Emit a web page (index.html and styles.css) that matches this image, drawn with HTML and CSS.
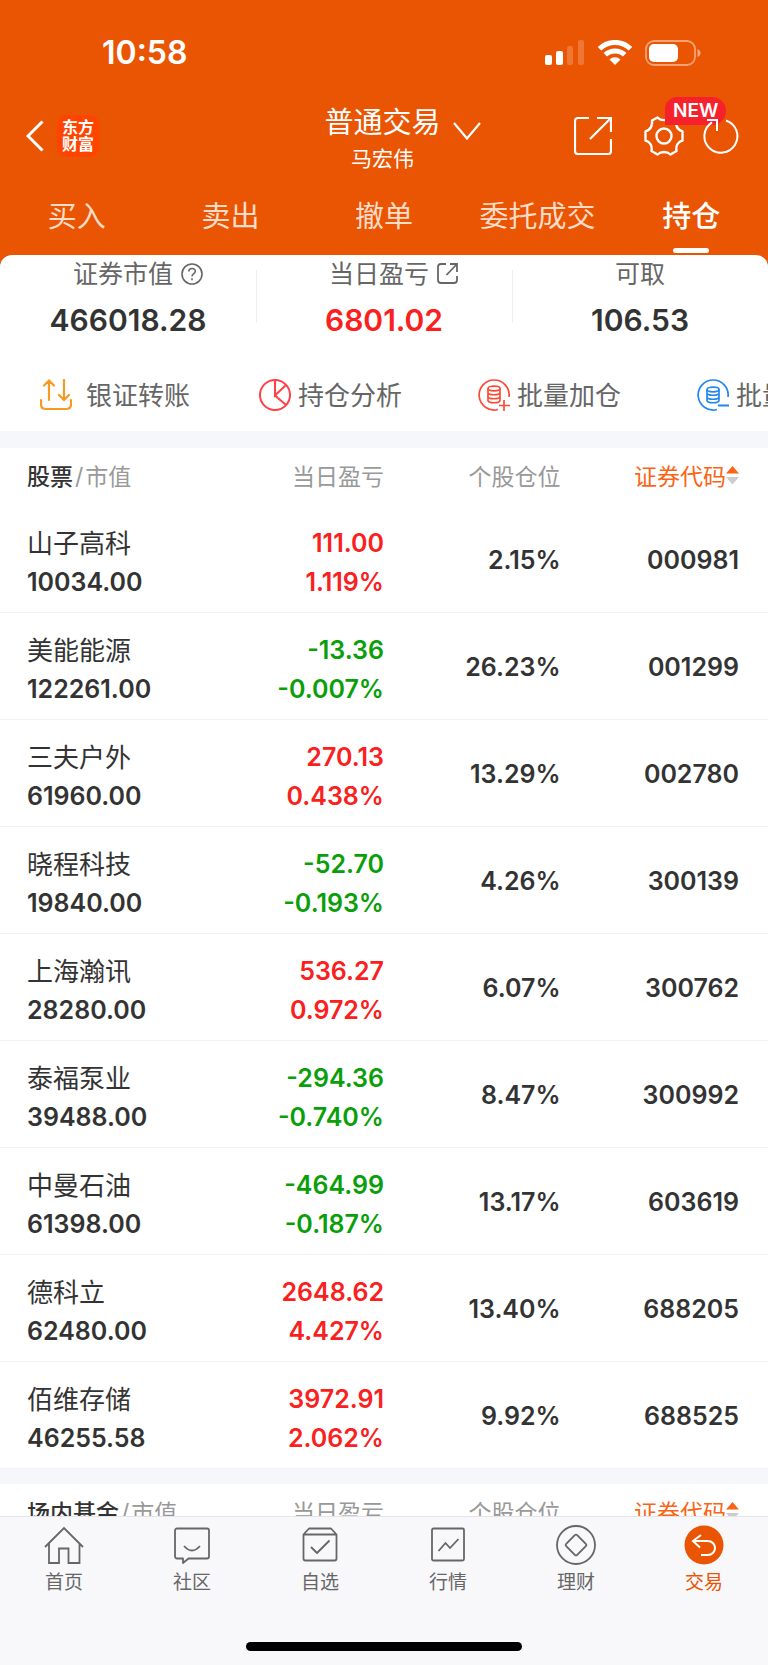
FILE: index.html
```html
<!DOCTYPE html>
<html lang="zh-CN">
<head>
  <meta charset="UTF-8">
  <meta name="viewport" content="width=device-width, initial-scale=1.0">
  <title>普通交易 - 持仓</title>
  <link rel="stylesheet" href="styles.css">
</head>
<body>
  <div class="app">
    <header class="header">
      <div class="status-bar">
        <div class="clock">10:58</div>
        <div class="status-icons">
          <svg width="40" height="26" viewBox="0 0 40 26" fill="#fff">
            <rect x="0" y="15" width="7" height="10" rx="2"/>
            <rect x="11" y="11" width="7" height="14" rx="2"/>
            <rect x="22" y="6" width="6" height="19" rx="2" opacity=".2"/>
            <rect x="33" y="0" width="6" height="25" rx="2" opacity=".2"/>
          </svg>
          <svg width="36" height="26" viewBox="0 0 36 26" fill="none" stroke="#fff" stroke-width="5">
            <path d="M2.500 8.800A22 22 0 0 1 33.500 8.800"/>
            <path d="M8.300 14.800A14 14 0 0 1 27.700 14.800"/>
            <path d="M18 25l-5.500-5.500a8 8 0 0 1 11 0z" fill="#fff" stroke="none"/>
          </svg>
          <svg width="56" height="26" viewBox="0 0 56 26">
            <rect x="1" y="1" width="49" height="24" rx="8" fill="none" stroke="#fff" stroke-width="1.800" opacity=".45"/>
            <rect x="4" y="4" width="29" height="18" rx="5" fill="#fff"/>
            <path d="M52.500 9c4 1.500 4 6.500 0 8z" fill="#fff" opacity=".5"/>
          </svg>
        </div>
      </div>

      <div class="nav">
        <div class="nav-left">
          <button class="icon-button" aria-label="返回">
            <svg width="18" height="32" viewBox="0 0 18 32" fill="none" stroke="#fff" stroke-width="3"><path d="M16.500 1.500L2 16l14.500 14.500"/></svg>
          </button>
          <div class="logo">东方<br>财富</div>
        </div>
        <button class="account">
          <span class="account-text">
            <span class="account-type">普通交易</span>
            <span class="account-name">马宏伟</span>
          </span>
          <svg class="chevron" width="28" height="18" viewBox="0 0 28 18" fill="none" stroke="#fff" stroke-width="2.200"><path d="M1 1l13 15.500L27 1"/></svg>
        </button>
        <div class="nav-right">
          <button class="icon-button share" aria-label="分享">
            <svg width="38" height="38" viewBox="0 0 38 38" fill="none" stroke="#fff" stroke-width="2.200"><path d="M15 1H4a3 3 0 0 0-3 3v30a3 3 0 0 0 3 3h30a3 3 0 0 0 3-3V22M23 1h14v14M37 1L16 22"/></svg>
          </button>
          <button class="icon-button settings" aria-label="设置">
            <svg width="40" height="40" viewBox="0 0 40 40" fill="none" stroke="#fff" stroke-width="2.400" stroke-linejoin="round">
              <path d="M13.500 1.500C16.500 5 23.500 5 26.500 1.500L32 4.500C31.500 10 34 14 38.500 15.500V24.500C34 26 31.500 30 32.500 35L26.500 38.500C23 35.200 17 35.200 13.500 38.500L7.500 35C8.500 30 6 26 1.500 24.500V15.500C6 14 8.500 10 8 4.500Z"/>
              <circle cx="20" cy="20" r="7.500"/>
            </svg>
            <span class="badge">NEW</span>
          </button>
          <button class="icon-button refresh" aria-label="刷新">
            <svg width="36" height="40" viewBox="0 0 36 40" fill="none" stroke="#fff" stroke-width="2"><path d="M23 4.500A16.500 16.500 0 1 1 9 6.300M4 4h10v11"/></svg>
          </button>
        </div>
      </div>

      <nav class="tabs">
        <a href="#buy">买入</a>
        <a href="#sell">卖出</a>
        <a href="#cancel">撤单</a>
        <a href="#orders">委托成交</a>
        <a href="#positions" class="active">持仓</a>
      </nav>
    </header>

    <main class="content">
      <section class="stats">
        <div class="stat">
          <div class="stat-label has-icon">证券市值
            <svg width="22" height="22" viewBox="0 0 22 22" fill="none" stroke="#666" stroke-width="1.600"><circle cx="11" cy="11" r="10"/><path d="M7.800 8.500c0-4 6.500-4 6.500-.3 0 2.500-3.300 2.500-3.300 5.300M11 15.200v2"/></svg>
          </div>
          <div class="stat-value">466018.28</div>
        </div>
        <div class="stat">
          <div class="stat-label has-icon">当日盈亏
            <svg width="22" height="22" viewBox="0 0 22 22" fill="none" stroke="#666" stroke-width="1.800"><path d="M9 1H4a3 3 0 0 0-3 3v13a3 3 0 0 0 3 3h13a3 3 0 0 0 3-3v-4M13 1h7v8M20 1L9.500 12"/></svg>
          </div>
          <div class="stat-value up">6801.02</div>
        </div>
        <div class="stat">
          <div class="stat-label">可取</div>
          <div class="stat-value">106.53</div>
        </div>
      </section>

      <section class="actions">
        <a href="#transfer" class="action transfer">
          <svg width="32" height="32" viewBox="0 0 32 32" fill="none" stroke="#f59a23" stroke-width="2.200" stroke-linecap="round"><path d="M9 21V2M4 6.500L9 1.500l5 5M24 1v19M19 16l5 5 5-5M1 21v4q0 5 5 5h20q5 0 5-5v-4"/></svg>
          <span>银证转账</span>
        </a>
        <a href="#analysis" class="action">
          <svg width="32" height="32" viewBox="0 0 32 32" fill="none" stroke="#ff4046" stroke-width="2"><circle cx="16" cy="16" r="15"/><path d="M16 1v15.500L27 6M16 16.500L27 26"/></svg>
          <span>持仓分析</span>
        </a>
        <a href="#batch-add" class="action">
          <svg width="32" height="32" viewBox="0 0 32 32" fill="none" stroke="#fb4b38" stroke-width="1.700"><path d="M20 30.500A15 15 0 1 1 31 18M26 21v11M21 26.500h11"/><ellipse cx="16" cy="9.500" rx="6" ry="2.300"/><path d="M10 9.500v12c0 3 12 3 12 0v-12M10 13.500c0 3 12 3 12 0M10 17.500c0 3 12 3 12 0"/></svg>
          <span>批量加仓</span>
        </a>
        <a href="#batch-reduce" class="action">
          <svg width="32" height="32" viewBox="0 0 32 32" fill="none" stroke="#2388ee" stroke-width="1.700"><path d="M20 30.500A15 15 0 1 1 31 18"/><path d="M21 26.500h11" stroke-width="2"/><ellipse cx="16" cy="10.500" rx="6" ry="2.300"/><path d="M10 10.500v11c0 3 12 3 12 0v-11M10 14c0 3 12 3 12 0M10 18c0 3 12 3 12 0"/></svg>
          <span>批量减仓</span>
        </a>
      </section>

      <table class="positions">
        <thead>
          <tr>
            <th><b>股票</b><i>/</i>市值</th>
            <th>当日盈亏</th>
            <th>个股仓位</th>
            <th><button class="sort">证券代码<svg width="13" height="20" viewBox="0 0 13 20"><path d="M0 8.500L6.500 1 13 8.500z" fill="#fa6414"/><path d="M0 12h13l-6.500 7.500z" fill="#ccc"/></svg></button></th>
          </tr>
        </thead>
        <tbody>
          <tr>
            <td><span class="name">山子高科</span>10034.00</td>
            <td class="up">111.00<br>1.119%</td>
            <td>2.15%</td>
            <td>000981</td>
          </tr>
          <tr>
            <td><span class="name">美能能源</span>122261.00</td>
            <td class="down">-13.36<br>-0.007%</td>
            <td>26.23%</td>
            <td>001299</td>
          </tr>
          <tr>
            <td><span class="name">三夫户外</span>61960.00</td>
            <td class="up">270.13<br>0.438%</td>
            <td>13.29%</td>
            <td>002780</td>
          </tr>
          <tr>
            <td><span class="name">晓程科技</span>19840.00</td>
            <td class="down">-52.70<br>-0.193%</td>
            <td>4.26%</td>
            <td>300139</td>
          </tr>
          <tr>
            <td><span class="name">上海瀚讯</span>28280.00</td>
            <td class="up">536.27<br>0.972%</td>
            <td>6.07%</td>
            <td>300762</td>
          </tr>
          <tr>
            <td><span class="name">泰福泵业</span>39488.00</td>
            <td class="down">-294.36<br>-0.740%</td>
            <td>8.47%</td>
            <td>300992</td>
          </tr>
          <tr>
            <td><span class="name">中曼石油</span>61398.00</td>
            <td class="down">-464.99<br>-0.187%</td>
            <td>13.17%</td>
            <td>603619</td>
          </tr>
          <tr>
            <td><span class="name">德科立</span>62480.00</td>
            <td class="up">2648.62<br>4.427%</td>
            <td>13.40%</td>
            <td>688205</td>
          </tr>
          <tr>
            <td><span class="name">佰维存储</span>46255.58</td>
            <td class="up">3972.91<br>2.062%</td>
            <td>9.92%</td>
            <td>688525</td>
          </tr>
        </tbody>
      </table>

      <table class="positions">
        <thead>
          <tr>
            <th><b>场内基金</b><i>/</i>市值</th>
            <th>当日盈亏</th>
            <th>个股仓位</th>
            <th><button class="sort">证券代码<svg width="13" height="20" viewBox="0 0 13 20"><path d="M0 8.500L6.500 1 13 8.500z" fill="#fa6414"/><path d="M0 12h13l-6.500 7.500z" fill="#ccc"/></svg></button></th>
          </tr>
        </thead>
      </table>
    </main>

    <footer class="footer">
      <nav class="tab-bar">
        <a href="#home">
          <svg width="40" height="40" viewBox="0 0 40 40" fill="none" stroke="#666" stroke-width="1.800"><path d="M1 22L20 3l19 19M5 18.500V38h10V23.500h9.500V38H35.500V18.500"/></svg>
          首页
        </a>
        <a href="#community">
          <svg width="40" height="40" viewBox="0 0 40 40" fill="none" stroke="#666" stroke-width="1.800" stroke-linejoin="round"><path d="M5 3.500h30a2 2 0 0 1 2 2v26a2 2 0 0 1-2 2H16.500L11 38v-4.500H5a2 2 0 0 1-2-2v-26a2 2 0 0 1 2-2z"/><path d="M12 21q8 9 16 0"/></svg>
          社区
        </a>
        <a href="#watchlist">
          <svg width="40" height="40" viewBox="0 0 40 40" fill="none" stroke="#666" stroke-width="1.800" stroke-linejoin="round"><path d="M3.500 9.500V33.500a2 2 0 0 0 2 2h29a2 2 0 0 0 2-2V9.500L31 3.500H9zM3.500 9.500h33M11 22l6 6 12.500-12.500"/></svg>
          自选
        </a>
        <a href="#market">
          <svg width="40" height="40" viewBox="0 0 40 40" fill="none" stroke="#666" stroke-width="1.800"><rect x="4" y="3.500" width="32" height="32" rx="1.500"/><path d="M10.500 26l7-8 4.500 5 8.500-9"/></svg>
          行情
        </a>
        <a href="#wealth">
          <svg width="40" height="40" viewBox="0 0 40 40" fill="none" stroke="#666" stroke-width="1.800" stroke-linejoin="round"><circle cx="20" cy="20" r="19"/><path d="M18.800 10.200q1.200-1.200 2.400 0l8.600 8.600q1.200 1.200 0 2.400l-8.600 8.600q-1.200 1.200-2.400 0l-8.600-8.600q-1.200-1.200 0-2.400z"/></svg>
          理财
        </a>
        <a href="#trade" class="active">
          <svg width="40" height="40" viewBox="0 0 40 40" fill="none"><circle cx="20" cy="20" r="19.500" fill="#ea5504"/><path d="M17 10L9 16l7 6.500M9 16h14.500c10 0 10 14 0 14H17" stroke="#fff" stroke-width="2"/></svg>
          交易
        </a>
      </nav>
      <div class="home-indicator"></div>
    </footer>
  </div>
</body>
</html>
```

FILE: styles.css
```css
* {
  margin: 0;
  padding: 0;
  box-sizing: border-box;
}
body {
  font-family: Inter, "Noto Sans CJK SC", sans-serif;
  color: #333;
}
a {
  color: inherit;
  text-decoration: none;
}
button {
  font: inherit;
  color: inherit;
  background: none;
  border: none;
  cursor: pointer;
}
svg {
  display: block;
  flex: none;
}
.app {
  display: flex;
  flex-direction: column;
  height: 100vh;
  overflow: hidden;
  background: #ea5504;
}

/* header */
.header {
  color: #fff;
}
.status-bar {
  display: flex;
  justify-content: space-between;
  align-items: center;
  height: 103px;
  padding: 2px 67px 0 102px;
}
.clock {
  font-size: 32px;
  font-weight: 600;
}
.status-icons {
  display: flex;
  gap: 12px;
}
.nav {
  display: grid;
  grid-template-columns: 1fr auto 1fr;
  height: 74px;
  padding: 0 29px 0 26px;
}
.nav-left, .nav-right {
  display: flex;
  align-items: center;
  padding-bottom: 8px;
}
.nav-left {
  gap: 13px;
}
.nav-right {
  justify-content: flex-end;
  gap: 19px;
}
.logo {
  width: 42px;
  padding: 4px 0;
  border-radius: 9px;
  background: #ff4400;
  font-size: 16px;
  font-weight: 700;
  line-height: 17px;
  text-align: center;
}
.account {
  display: flex;
  align-items: center;
  gap: 12px;
}
.account::before {
  content: "";
  width: 28px;
}
.account-text {
  display: flex;
  flex-direction: column;
}
.account-type {
  font-size: 29px;
  line-height: 38px;
}
.account-name {
  font-size: 21px;
  line-height: 34px;
}
.chevron {
  margin-bottom: 18px;
}
.share {
  margin-right: 13px;
}
.settings {
  position: relative;
}
.badge {
  position: absolute;
  top: -19px;
  left: 21px;
  padding: 0 8px;
  border-radius: 12px 14px 14px 0;
  background: #f5222d;
  font-size: 19px;
  font-weight: 600;
  line-height: 28px;
}
.refresh {
  position: relative;
  z-index: 1;
}
.tabs {
  display: grid;
  grid-template-columns: repeat(5, 1fr);
  height: 78px;
}
.tabs a {
  position: relative;
  color: #ffdcc8;
  font-size: 29px;
  line-height: 80px;
  text-align: center;
}
.tabs .active {
  color: #fff;
  font-weight: 500;
}
.tabs .active::after {
  content: "";
  position: absolute;
  left: 50%;
  bottom: 4px;
  width: 36px;
  height: 5px;
  margin-left: -18px;
  border-radius: 3px;
  background: #fff;
}

/* content */
.content {
  flex: 1;
  min-height: 0;
  overflow: hidden;
  border-radius: 12px 12px 0 0;
  background: #fff;
}
.stats {
  display: grid;
  grid-template-columns: repeat(3, 1fr);
  text-align: center;
}
.stat + .stat {
  background: linear-gradient(#eee, #eee) 0 15px / 1px 53px no-repeat;
}
.stat-label {
  display: flex;
  justify-content: center;
  align-items: center;
  gap: 8px;
  color: #666;
  font-size: 25px;
  line-height: 38px;
}
.has-icon {
  padding-left: 20px;
}
.stat-value {
  font-size: 30px;
  font-weight: 600;
  line-height: 54px;
}
.actions {
  display: flex;
  height: 84px;
  padding: 12px 0 0 40px;
}
.action {
  display: flex;
  flex: 0 0 219px;
  align-items: center;
  gap: 7px;
  color: #666;
  font-size: 26px;
}
.action span {
  padding-bottom: 4px;
}
.transfer {
  gap: 14px;
}
.up {
  color: #fa2020;
}
.down {
  color: #0a9f0a;
}

/* positions */
.positions {
  width: 100%;
  border-top: 17px solid #f6f7fb;
  border-spacing: 0;
  table-layout: fixed;
  text-align: right;
  white-space: nowrap;
}
.positions + .positions {
  border-top-width: 15px;
}
.positions th {
  height: 58px;
  padding-bottom: 4px;
  color: #999;
  font-size: 23px;
  font-weight: 400;
}
.positions th:nth-child(1) {
  width: 26%;
}
.positions th:nth-child(2) {
  width: 24%;
}
.positions th:nth-child(3) {
  width: 23%;
}
.positions th:first-child, .positions td:first-child {
  padding-left: 27px;
  text-align: left;
}
.positions th:last-child, .positions td:last-child {
  padding-right: 29px;
}
.positions b {
  color: #333;
  font-weight: 500;
}
.positions i {
  padding: 0 2px;
  font-style: normal;
}
.positions td {
  height: 107px;
  padding-top: 2px;
  border-bottom: 1px solid #f2f2f2;
  font-size: 25px;
  font-weight: 600;
  line-height: 39px;
}
.positions td:nth-child(-n+2) {
  padding-top: 7px;
}
.name {
  display: block;
  font-size: 26px;
  font-weight: 400;
}
.sort {
  display: inline-flex;
  align-items: center;
  color: #fa6414;
}

/* footer */
.footer {
  padding: 8px 0 14px;
  border-top: 1px solid #e4e4ea;
  background: #f8f8fb;
}
.tab-bar {
  display: grid;
  grid-template-columns: repeat(6, 1fr);
}
.tab-bar a {
  display: flex;
  flex-direction: column;
  align-items: center;
  color: #666;
  font-size: 19px;
  line-height: 36px;
}
.tab-bar .active {
  color: #ea5504;
}
.home-indicator {
  width: 36%;
  height: 9px;
  margin: 41px auto 0;
  border-radius: 5px;
  background: #000;
}
```
